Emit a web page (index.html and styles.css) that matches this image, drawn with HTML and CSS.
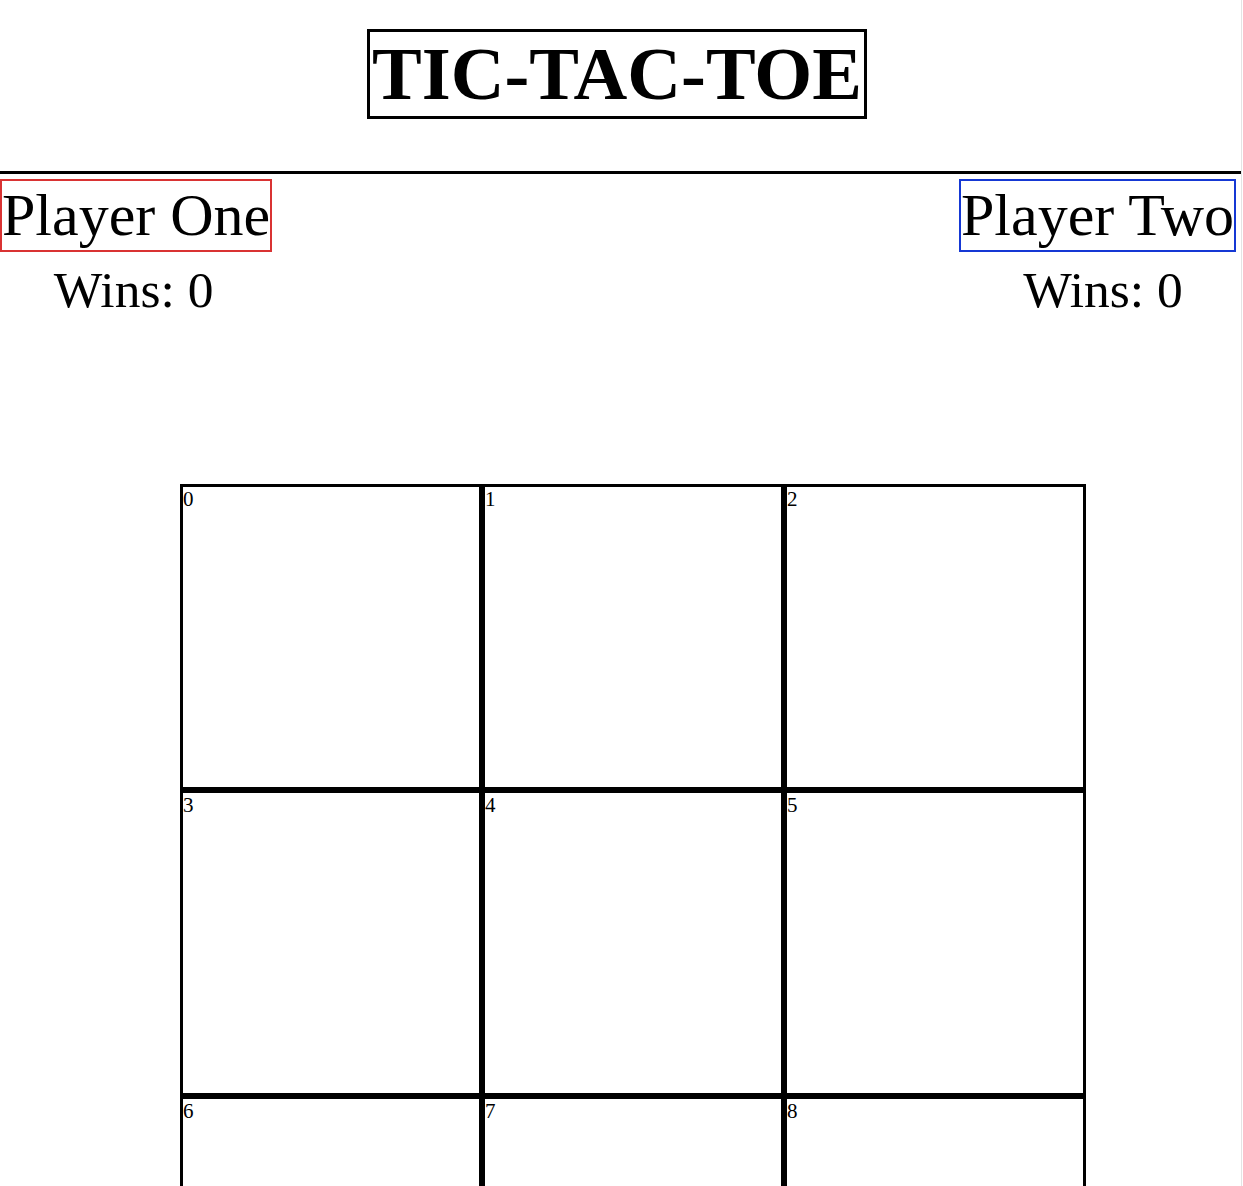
FILE: index.html
```html
<!DOCTYPE html>
<html>
<head>
    <title>Tic-Tac-Toe</title>
    <meta charset="utf-8">
    <link rel="stylesheet" href="styles.css">
</head>
<body>
    <div class="page">
        <div class="masthead">
            <h1 class="title">TIC-TAC-TOE</h1>
        </div>
        <hr class="rule">
        <div class="players">
            <div class="player one">
                <div class="name">Player One</div>
                <div class="wins">Wins: <span id="winsOne">0</span></div>
            </div>
            <div class="player two">
                <div class="name">Player Two</div>
                <div class="wins">Wins: <span id="winsTwo">0</span></div>
            </div>
        </div>
        <div class="board">
            <div class="cell" id="0">0</div>
            <div class="cell" id="1">1</div>
            <div class="cell" id="2">2</div>
            <div class="cell" id="3">3</div>
            <div class="cell" id="4">4</div>
            <div class="cell" id="5">5</div>
            <div class="cell" id="6">6</div>
            <div class="cell" id="7">7</div>
            <div class="cell" id="8">8</div>
        </div>
    </div>
</body>
</html>
```
FILE: styles.css
```css
*{margin: 0;padding: 0;box-sizing: border-box;}
body{font-family: "Liberation Serif", "Times New Roman", serif;color: #000;background: #fff;}
.page{width: 1242px;border-right: 1px solid #e4e4e4;}
.masthead{text-align: center;padding: 29px 7px 0 0;}
.title{display: inline-block;font-size: 74.5px;font-weight: bold;line-height: 84px;border: 3px solid #000;padding: 0 2px;}
.rule{margin-top: 52px;border: 0;border-top: 3px solid #000;}
.players{display: flex;justify-content: space-between;padding: 5px 5px 0 0;}
.player{text-align: center;}
.name{font-size: 60px;line-height: 69px;border: 2px solid;}
.one .name{border-color: #d93333;}
.two .name{border-color: #1538d4;}
.wins{font-size: 51.5px;line-height: 58px;margin-top: 9px;}
.one .wins{padding-right: 5px;}
.two .wins{padding-left: 11px;}
.board{display: grid;grid-template-columns: repeat(3, 302px);grid-auto-rows: 306px;margin: 165px 0 0 180px;}
.cell{border: 3px solid #000;font-size: 21px;line-height: 24px;}
```
